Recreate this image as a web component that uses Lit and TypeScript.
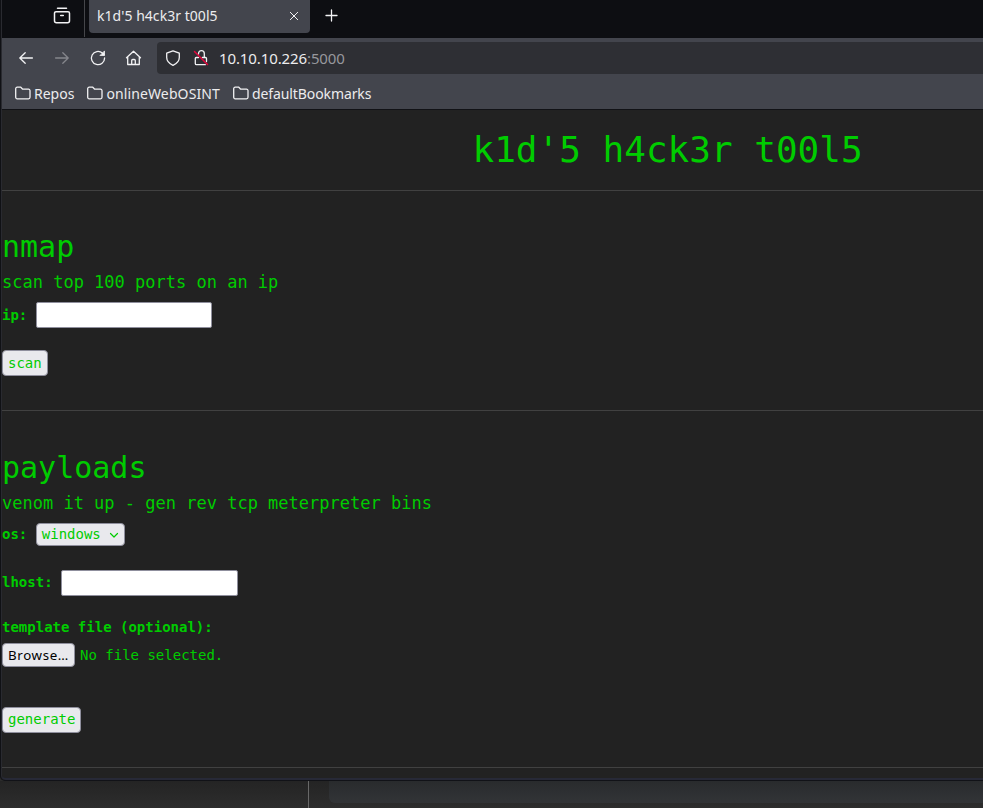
import { LitElement, html, css, svg } from "lit";
import { customElement } from "lit/decorators.js";

const folder = html`<svg class="folder" width="16" height="14" viewBox="0 0 16 14">
  <path d="M2.200 1.200h3.600l1.900 2h5.800a1.500 1.500 0 0 1 1.500 1.500v6.600a1.500 1.500 0 0 1-1.500 1.500h-11.300a1.500 1.500 0 0 1-1.500-1.500v-8.600a1.500 1.500 0 0 1 1.500-1.500z"/>
</svg>`;

const icon = (cls: string, body: unknown) =>
  html`<svg class="icon ${cls}" width="18" height="18" viewBox="0 0 18 18">${body}</svg>`;

const bookmarks = [
  { label: "Repos", cls: "" },
  { label: "onlineWebOSINT", cls: "wide" },
  { label: "defaultBookmarks", cls: "tight" },
];

@customElement("app-root")
export class AppRoot extends LitElement {
  static styles = css`
    :host { display: block; height: 808px; overflow: hidden; background: #2b2b2b; }
    * { box-sizing: border-box; }
    svg { display: block; flex: none; fill: none; stroke: #f2f2f4; stroke-width: 1.3; stroke-linecap: round; stroke-linejoin: round; }
    .window { height: 781px; border-left: 1px solid #101115; border-bottom: 1px solid #111217; border-bottom-left-radius: 5px; overflow: hidden; background: #222; }
    .inner { height: 780px; border-left: 1px solid #292a30; border-bottom: 2px solid #272937; border-bottom-left-radius: 5px; display: flex; flex-direction: column; }
    .chrome { font: 14px "Noto Sans", sans-serif; color: #ececee; flex: none; }
    .tabs { height: 38px; background: #0d0e12; display: flex; align-items: flex-start; }
    .recent { margin: 7px 0 0 51px; }
    .sep { width: 1px; height: 37px; background: #45464a; margin-left: 13px; }
    .tab { width: 221px; height: 33px; margin-left: 4px; padding: 0 11px 2px 8px; background: #43454d; border-radius: 0 0 4px 4px; display: flex; align-items: center; justify-content: space-between; }
    .tab span { letter-spacing: .04px; }
    .plus { margin: 9px 0 0 15px; }
    .nav { height: 40px; background: #43454d; display: flex; align-items: center; padding-left: 15px; }
    .nav > .icon { margin-right: 18px; }
    .nav > .home { margin: 0 15px 0 -1px; }
    .dim { stroke: #85868c; }
    .url { flex: 1; height: 32px; background: #2e2f34; border-radius: 4px 0 0 4px; display: flex; align-items: center; padding-left: 7px; font-size: 15px; letter-spacing: -.11px; }
    .lock { margin: 0 9px 0 10px; }
    .url .slash { stroke: #e2063c; stroke-width: 1.5; }
    .port { color: #97989d; }
    .marks { height: 32px; background: #43454d; border-bottom: 1px solid #111216; display: flex; align-items: center; padding: 0 0 1px 13px; }
    .mark { display: flex; align-items: center; gap: 3px; margin-right: 13px; }
    .wide { letter-spacing: .12px; }
    .tight { letter-spacing: -.1px; }
    .page { flex: 1; font: 14px/20px "DejaVu Sans Mono", monospace; color: #0c0; }
    .banner { height: 81px; border-bottom: 1px solid #414141; padding: 19px 0 0 470.500px; font-size: 36px; line-height: 42px; white-space: nowrap; }
    .section { height: 220px; border-bottom: 1px solid #414141; padding-top: 36px; }
    .payloads { height: 357px; padding-top: 37px; }
    h2 { margin: 0; font-size: 30px; line-height: 40px; font-weight: 400; }
    .sub { font-size: 17px; line-height: 24px; margin-top: 3px; }
    .row { display: flex; align-items: center; font-weight: 700; gap: 9px; }
    .field { width: 176px; height: 26px; background: #fff; border: 1px solid #8f8f9d; border-radius: 2px; }
    .btn { height: 26px; padding: 0 5px; font: 14px/24px "DejaVu Sans Mono", monospace; color: #0c0; background: #e9e9ed; border: 1px solid #8f8f9d; border-radius: 4px; display: block; width: max-content; }
    .ip { margin: 8px 0 22px; }
    .os { margin-top: 8px; line-height: 18px; }
    .os .label { margin-top: -1px; }
    .select { height: 23px; width: 89px; padding-left: 4.500px; line-height: 21px; display: flex; align-items: center; justify-content: space-between; }
    .select svg { stroke: #0c0; stroke-width: 1.2; }
    .lhost { margin: 24px 0 21px; gap: 8px; }
    .lhost .label { margin-top: -2px; }
    .lhost .field { width: 177px; }
    .file { display: flex; align-items: center; gap: 5px; margin: 6px 0 40px; }
    .browse { width: 73px; height: 24px; padding: 0 5px; line-height: 22px; font-family: "Noto Sans", sans-serif; font-size: 13.300px; letter-spacing: .65px; color: #000; white-space: nowrap; }
    .generate { line-height: 22px; }
    .below { height: 27px; display: flex; background: linear-gradient(#242424, #2d2d2d); }
    .side { width: 309px; border-right: 1px solid #686868; }
    .panel { flex: 1; height: 22px; margin-left: 20px; border-bottom-left-radius: 6px; background: linear-gradient(#292b2d, #323437); }
  `;

  render() {
    return html`
      <div class="window"><div class="inner">
        <div class="chrome">
          <div class="tabs">
            ${icon("recent", svg`<path d="M4.500 1.300h9M3 4.700h12a1.500 1.500 0 0 1 1.500 1.500v7.500a2 2 0 0 1-2 2h-11a2 2 0 0 1-2-2V6.200a1.500 1.500 0 0 1 1.500-1.500zM7.700 8.500h2.600" stroke-width="1.5"/>`)}
            <div class="sep"></div>
            <div class="tab"><span>k1d'5 h4ck3r t00l5</span>
              <svg width="10" height="10" viewBox="0 0 10 10"><path d="M1.300 1.300l7.400 7.400M8.700 1.300l-7.400 7.400" stroke-width="1"/></svg></div>
            <svg class="plus" width="13" height="13" viewBox="0 0 13 13"><path d="M6.500 1v11M1 6.500h11"/></svg>
          </div>
          <div class="nav">
            ${icon("", svg`<path d="M15.400 9H2.800M8.200 3.700L2.800 9l5.400 5.300"/>`)}
            ${icon("dim", svg`<path d="M2.600 9h12.600M9.800 3.700L15.200 9l-5.400 5.300"/>`)}
            ${icon("", svg`<path d="M15.600 9a6.600 6.600 0 1 1-2.200-4.900L15 5.800"/><path d="M15.500 2.300v4.200h-4.200z" fill="#f2f2f4" stroke-width=".8"/>`)}
            ${icon("home", svg`<path d="M2.500 8.700L9.500 2.200l7 6.500M3.700 7.800v7.700h11.600V7.800M7.700 15.500v-4a1 1 0 0 1 1-1h1.600a1 1 0 0 1 1 1v4"/>`)}
            <div class="url">
              ${icon("", svg`<path d="M9 1.800l6.300 2.400v4.200c0 3.600-2.400 6-6.300 8-3.900-2-6.300-4.400-6.300-8V4.200z"/>`)}
              ${icon("lock", svg`<path d="M6.500 5.200V4.600a2.900 2.900 0 0 1 5.800 0v3.700M10.300 8.500h3.200a1 1 0 0 1 1 1v3M6.500 8.500H4.300a1 1 0 0 0-1 1v5a1.200 1.200 0 0 0 1.200 1.200h8.800"/><path class="slash" d="M2.500 2.500l13 13"/>`)}
              <span>10.10.10.226<span class="port">:5000</span></span>
            </div>
          </div>
          <div class="marks">
            ${bookmarks.map((m) => html`<div class="mark">${folder}<span class=${m.cls}>${m.label}</span></div>`)}
          </div>
        </div>
        <div class="page">
          <div class="banner">k1d'5 h4ck3r t00l5</div>
          <div class="section">
            <h2>nmap</h2>
            <div class="sub">scan top 100 ports on an ip</div>
            <div class="row ip">ip: <div class="field"></div></div>
            <div class="btn">scan</div>
          </div>
          <div class="section payloads">
            <h2>payloads</h2>
            <div class="sub">venom it up - gen rev tcp meterpreter bins</div>
            <div class="row os"><span class="label">os:</span>
              <div class="btn select">windows <svg width="10" height="8" viewBox="0 0 10 8"><path d="M1.500 2.500L5 6l3.500-3.500"/></svg></div>
            </div>
            <div class="row lhost"><span class="label">lhost:</span> <div class="field"></div></div>
            <div class="row">template file (optional):</div>
            <div class="file"><div class="btn browse">Browse…</div>No file selected.</div>
            <div class="btn generate">generate</div>
          </div>
        </div>
      </div></div>
      <div class="below"><div class="side"></div><div class="panel"></div></div>
    `;
  }
}
